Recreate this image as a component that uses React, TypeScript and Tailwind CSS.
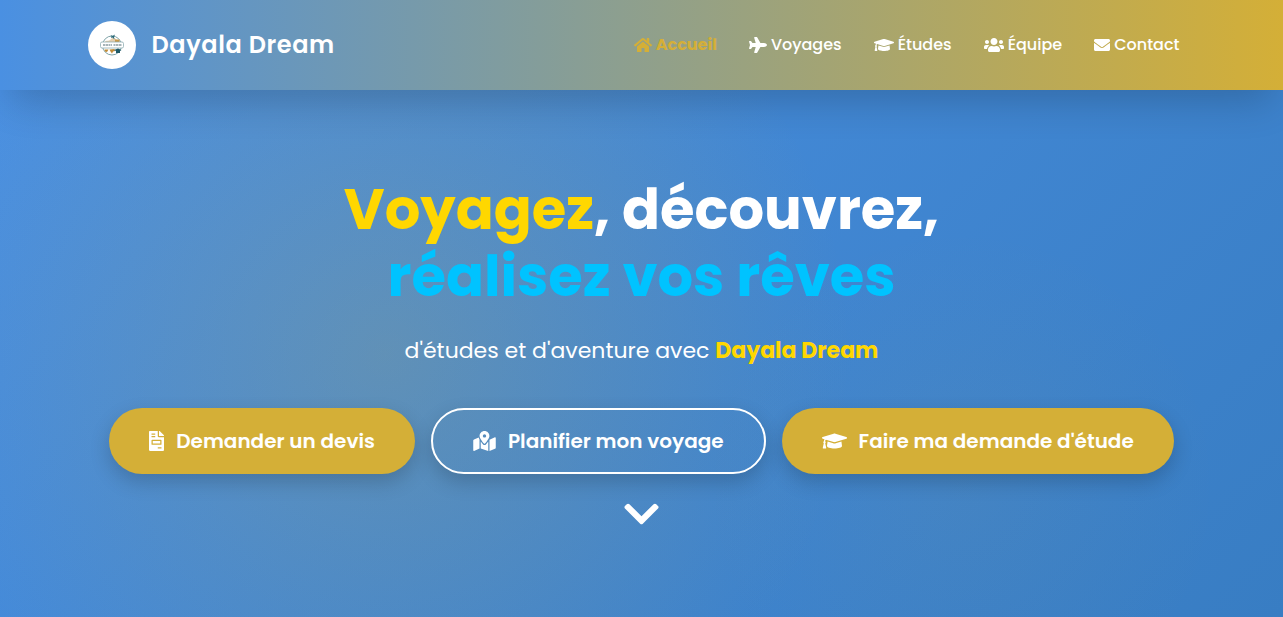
import {
  FaChevronDown,
  FaEnvelope,
  FaFileInvoice,
  FaGraduationCap,
  FaHome,
  FaMapMarkedAlt,
  FaPlane,
  FaUsers,
} from "react-icons/fa";

const navLinks = [
  { label: "Accueil", href: "#accueil", icon: FaHome, size: "w-[18px]", active: true },
  { label: "Voyages", href: "#voyages", icon: FaPlane, size: "w-[18px]", active: false },
  { label: "Études", href: "#etudes", icon: FaGraduationCap, size: "w-5", active: false },
  { label: "Équipe", href: "#equipe", icon: FaUsers, size: "w-5", active: false },
  { label: "Contact", href: "#contact", icon: FaEnvelope, size: "w-4", active: false },
];

const actions = [
  { label: "Demander un devis", icon: FaFileInvoice, size: "w-[15px]", outline: false },
  { label: "Planifier mon voyage", icon: FaMapMarkedAlt, size: "w-[23px]", outline: true },
  { label: "Faire ma demande d'étude", icon: FaGraduationCap, size: "w-[25px]", outline: false },
];

function Logo() {
  return (
    <span className="flex size-12 shrink-0 items-center justify-center rounded-full bg-white">
      <svg viewBox="0 0 48 48" className="size-6" aria-hidden="true">
        <circle cx="24" cy="25" r="19" fill="#fff" stroke="#7fa3a8" strokeWidth="2" />
        <path d="M9 18c4-5 8-1 11-4s5-6 9-4 3 5 8 4l3 4z" fill="#e6cfae" />
        <path d="M30 13h9v5h-9z" fill="#c99a4a" />
        <path d="M21 4l4 2 5-3-2 5 1 5-4-4-3 1 1-3z" fill="#2c6a78" />
        <rect x="1" y="18" width="46" height="12" rx="3" fill="#fff" stroke="#8aa9ad" strokeWidth="1.5" />
        <path d="M6 24h5m1 0h4m1 0h4m1 0h2m3 0h4m1 0h4m1 0h6" stroke="#8b9ca1" strokeWidth="3" />
        <path d="M9 33h8l-3 5-4-1zM19 33l10-1 1 4-4 1-2 4-3-4z" fill="#c18b35" />
        <path d="M28 34l8-3 7 3-3 2v4h-8v-4z" fill="#1f5a68" />
      </svg>
    </span>
  );
}

function Header() {
  return (
    <header className="relative z-10 bg-[linear-gradient(90deg,#4a90e2,#d4af37)] shadow-[0_20px_40px_-10px_rgba(0,0,0,0.2)]">
      <div className="mx-auto flex h-[90px] max-w-[1140px] items-center justify-between px-4">
        <a href="#accueil" className="flex items-center gap-4 text-2xl font-semibold tracking-wide">
          <Logo />
          Dayala Dream
        </a>
        <nav className="flex">
          {navLinks.map(({ label, href, icon: Icon, size, active }) => (
            <a
              key={label}
              href={href}
              className={`flex items-center gap-1 px-4 text-base ${
                active ? "font-bold text-[#d4af37]" : "font-medium"
              }`}
            >
              <Icon className={`h-4 ${size}`} />
              {label}
            </a>
          ))}
        </nav>
      </div>
    </header>
  );
}

function Hero() {
  return (
    <main
      id="accueil"
      className="flex min-h-[calc(100vh-90px)] flex-col items-center justify-center bg-[radial-gradient(circle_at_30%_50%,rgba(212,175,55,0.2)_0%,transparent_50%),radial-gradient(circle_at_75%_75%,rgba(212,175,55,0.05)_0%,transparent_25%),linear-gradient(135deg,#4a90e2_0%,#387dc3_100%)] px-4 pt-0.5 text-center"
    >
      <h1 className="text-[56px] leading-[67px] font-bold">
        <span className="text-[#ffd700]">Voyagez</span>, découvrez,
        <br />
        <span className="text-[#00c3ff]">réalisez vos rêves</span>
      </h1>
      <p className="mt-6 text-[22px] leading-[34px]">
        d'études et d'aventure avec <strong className="font-bold text-[#ffd700]">Dayala Dream</strong>
      </p>
      <div className="mt-10 flex flex-wrap justify-center gap-4">
        {actions.map(({ label, icon: Icon, size, outline }) => (
          <button
            key={label}
            type="button"
            className={`flex h-[66px] items-center gap-3 rounded-full px-10 text-xl font-semibold shadow-[0_8px_20px_rgba(0,0,0,0.18)] ${
              outline ? "border-2 border-white" : "bg-[#d4af37]"
            }`}
          >
            <Icon className={`h-5 ${size}`} />
            {label}
          </button>
        ))}
      </div>
      <a href="#voyages" aria-label="Défiler vers le bas" className="mt-5">
        <FaChevronDown className="h-10 w-[35px]" />
      </a>
    </main>
  );
}

export default function App() {
  return (
    <div className="min-h-screen font-['Poppins','Inter',sans-serif] text-white">
      <Header />
      <Hero />
    </div>
  );
}
